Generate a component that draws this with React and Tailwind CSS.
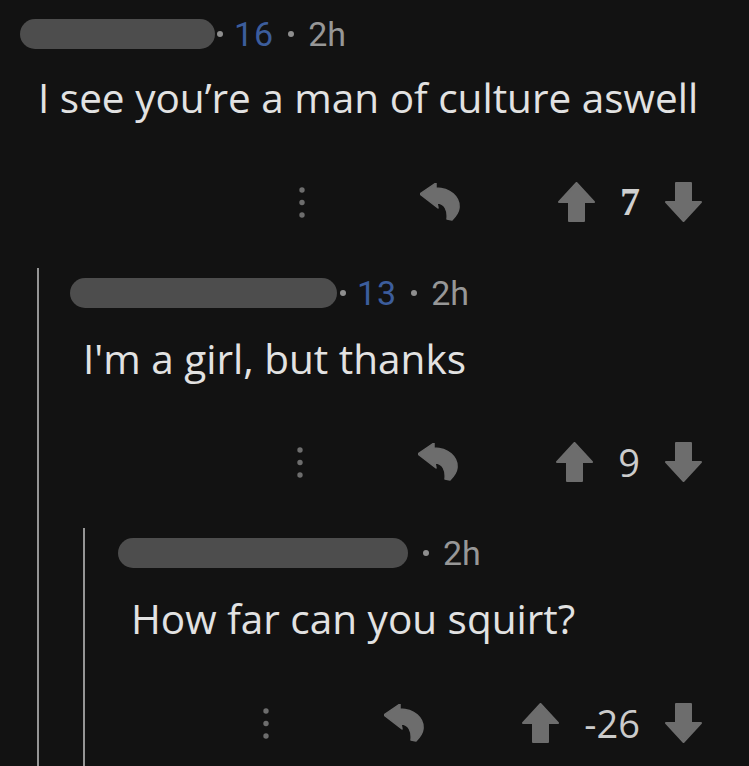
import React from 'react';

const ICON = '#6d6d6d';

const Dots = () => (
  <svg width="6" height="31" viewBox="0 0 6 31" className="shrink-0">
    <circle cx="3" cy="3" r="2.7" fill={ICON} />
    <circle cx="3" cy="15.5" r="2.7" fill={ICON} />
    <circle cx="3" cy="28" r="2.7" fill={ICON} />
  </svg>
);

const Reply = () => (
  <svg width="40" height="38" viewBox="0 0 40 38" className="shrink-0">
    <path
      d="M0 11 L16 0 L16 5 C30 5 40 14 39 25 C38.5 30 35 34 32 37 L27 36 C28 28 25 20 17 20 L18 25 Z"
      fill={ICON}
      stroke={ICON}
      strokeWidth="1.5"
      strokeLinejoin="round"
    />
  </svg>
);

const Arrow = ({ down }) => (
  <svg width="37" height="40" viewBox="0 0 37 40" className={down ? 'shrink-0 rotate-180' : 'shrink-0'}>
    <path
      d="M18.5 1 L36 20 L26 20 L26 39 L11 39 L11 20 L1 20 Z"
      fill={ICON}
      stroke={ICON}
      strokeWidth="2"
      strokeLinejoin="round"
    />
  </svg>
);

const Dot = ({ className = '' }) => (
  <span className={'w-[6px] h-[6px] rounded-full bg-[#8e8e8e] shrink-0 ' + className} />
);

// username is blurred out in the screenshot, so it's just a grey pill
const Header = ({ pillW, pillGap, score }) => (
  <div className="flex items-center h-[40px] font-['Roboto',sans-serif] text-[34px] leading-[40px] text-[#979797]">
    <span className="h-[30px] rounded-full bg-[#4d4d4d] shrink-0" style={{ width: pillW }} />
    <Dot className={pillGap} />
    {score && (
      <>
        <span className="ml-[11px] text-[#3c5d9c] tracking-[1px]">{score}</span>
        <Dot className="ml-[14px]" />
      </>
    )}
    <span className="ml-[14px]">2h</span>
  </div>
);

const Body = ({ children, className = '' }) => (
  <p className={"font-['Open_Sans',sans-serif] text-[40.5px] leading-[48px] text-[#e2e2e2] whitespace-nowrap " + className}>
    {children}
  </p>
);

const Actions = ({ votes, serif }) => (
  <div className="flex items-center justify-end h-[40px]">
    <Dots />
    <span className="ml-[115px]"><Reply /></span>
    <span className="ml-[98px]"><Arrow /></span>
    <span
      className={
        serif
          ? "ml-[25px] font-['Liberation_Serif',serif] font-bold text-[40px] leading-none text-[#cfcfcf]"
          : "ml-[25px] font-['Open_Sans',sans-serif] text-[38px] leading-none text-[#cbcbcb]"
      }
    >
      {votes}
    </span>
    <span className="ml-[25px]"><Arrow down /></span>
  </div>
);

export default function App() {
  return (
    <div className="w-[749px] h-[766px] overflow-hidden bg-[#121212] pl-[20px] pr-[47px] pt-[14px]">
      <Header pillW={195} pillGap="ml-[2px]" score="16" />
      <Body className="mt-[20px] pl-[18px]">I see you’re a man of culture aswell</Body>
      <div className="mt-[60px]">
        <Actions votes="7" serif />
      </div>

      <div className="mt-[46px] ml-[17px] border-l-2 border-[#959595] pl-[31px] pt-[5px]">
        <Header pillW={267} pillGap="ml-[3px]" score="13" />
        <Body className="mt-[22px] pl-[13px]">I'm a girl, but thanks</Body>
        <div className="mt-[59px]">
          <Actions votes="9" />
        </div>

        <div className="mt-[46px] ml-[13px] border-l-2 border-[#959595] pl-[33px] pt-[5px] pb-[40px]">
          <Header pillW={290} pillGap="ml-[15px]" />
          <Body className="mt-[22px] pl-[13px]">How far can you squirt?</Body>
          <div className="mt-[60px]">
            <Actions votes="-26" />
          </div>
        </div>
      </div>
    </div>
  );
}
